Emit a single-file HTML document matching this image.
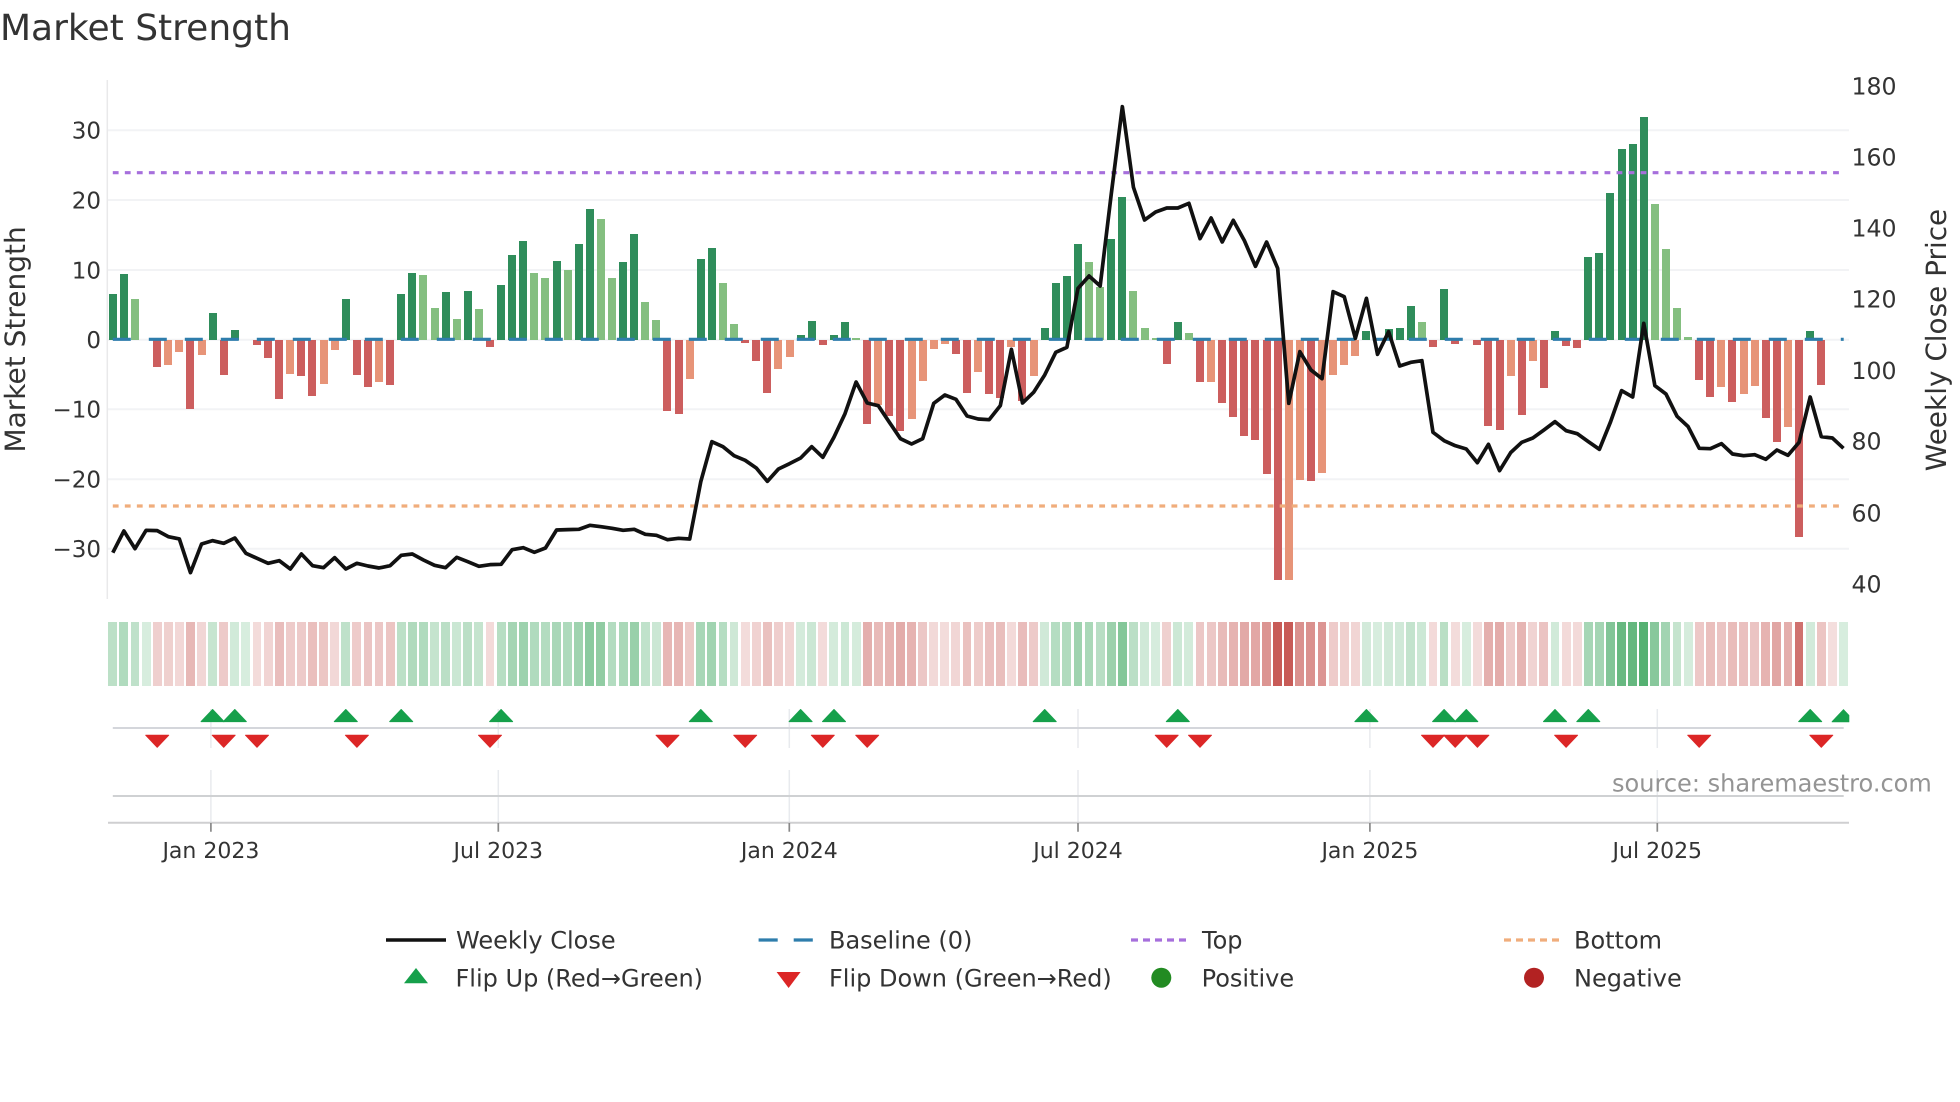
<!DOCTYPE html>
<html lang="en">
<head>
<meta charset="utf-8">
<title>Market Strength</title>
<style>
html,body{margin:0;padding:0;background:#fff;width:1960px;height:1102px;overflow:hidden}
svg{position:absolute;left:0;top:0}
text{font-family:"DejaVu Sans",sans-serif;fill:#333;text-rendering:geometricPrecision}
#r{position:absolute;left:107.25px;top:0;width:1741.8px;height:0;display:flex}
#r i{flex:0 0 11.094px;width:11.094px;height:0;position:relative;display:block}
#r i::before{content:"";position:absolute;left:1.55px;width:8px}
#r i::after{content:"";position:absolute;left:1.1px;width:8.9px;top:622px;height:64px}
.g::before,.h::before{top:calc(339.7px - var(--v)*6.975px);height:calc(var(--v)*6.975px)}
.r::before,.s::before{top:339.7px;height:calc(var(--v)*6.975px)}
.g::before{background:#2f8d5b}
.h::before{background:#84bf80}
.r::before{background:#cc5e5e}
.s::before{background:#e79478}
.g::after,.h::after{background:rgba(42,157,78,calc(.19 + var(--v)*.019))}
.r::after,.s::after{background:rgba(190,60,55,calc(.17 + var(--v)*.0195))}
</style>
</head>
<body>
<svg width="1960" height="1102" viewBox="0 0 1960 1102">
<g stroke="#f2f3f5" stroke-width="2" fill="none">
<path d="M108 130.3H1849M108 200H1849M108 270H1849M108 339.7H1849M108 409.3H1849M108 479.3H1849M108 548.7H1849"/>
</g>
<path d="M107.3 80V599" stroke="#e9e9ea" stroke-width="1.5" fill="none"/>
<g stroke="#e8eaee" stroke-width="1.5" fill="none">
<path d="M210.9 709V748M498.3 709V748M789.3 709V748M1078 709V748M1369.9 709V748M1657.3 709V748"/>
<path d="M210.9 770V823M498.3 770V823M789.3 770V823M1078 770V823M1369.9 770V823M1657.3 770V823"/>
</g>
<path d="M112.8 728H1843.7" stroke="#d4d6db" stroke-width="2" fill="none"/>
<path d="M112.8 796H1843.7" stroke="#cfd1d3" stroke-width="2" fill="none"/>
<path d="M108 822.7H1849" stroke="#cfcfd1" stroke-width="2" fill="none"/>
<path d="M210.9 823V831.7M498.3 823V831.7M789.3 823V831.7M1078 823V831.7M1369.9 823V831.7M1657.3 823V831.7" stroke="#888" stroke-width="1.7" fill="none"/>
</svg>

<div id="r">
<i class="g" style="--v:6.55"></i><i class="g" style="--v:9.4"></i><i class="h" style="--v:5.9"></i><i class="g" style="--v:0"></i><i class="r" style="--v:3.9"></i><i class="s" style="--v:3.7"></i><i class="s" style="--v:1.7"></i><i class="r" style="--v:9.9"></i><i class="s" style="--v:2.15"></i><i class="g" style="--v:3.8"></i>
<i class="r" style="--v:5.1"></i><i class="g" style="--v:1.4"></i><i class="g" style="--v:0"></i><i class="r" style="--v:.75"></i><i class="r" style="--v:2.6"></i><i class="r" style="--v:8.55"></i><i class="s" style="--v:4.9"></i><i class="r" style="--v:5.2"></i><i class="r" style="--v:8.1"></i><i class="s" style="--v:6.35"></i>
<i class="s" style="--v:1.5"></i><i class="g" style="--v:5.8"></i><i class="r" style="--v:5"></i><i class="r" style="--v:6.8"></i><i class="s" style="--v:6"></i><i class="r" style="--v:6.5"></i><i class="g" style="--v:6.55"></i><i class="g" style="--v:9.55"></i><i class="h" style="--v:9.3"></i><i class="h" style="--v:4.5"></i>
<i class="g" style="--v:6.85"></i><i class="h" style="--v:3"></i><i class="g" style="--v:6.95"></i><i class="h" style="--v:4.4"></i><i class="r" style="--v:1.1"></i><i class="g" style="--v:7.8"></i><i class="g" style="--v:12.2"></i><i class="g" style="--v:14.15"></i><i class="h" style="--v:9.5"></i><i class="h" style="--v:8.85"></i>
<i class="g" style="--v:11.3"></i><i class="h" style="--v:9.95"></i><i class="g" style="--v:13.7"></i><i class="g" style="--v:18.7"></i><i class="h" style="--v:17.25"></i><i class="h" style="--v:8.85"></i><i class="g" style="--v:11.1"></i><i class="g" style="--v:15.1"></i><i class="h" style="--v:5.4"></i><i class="h" style="--v:2.8"></i>
<i class="r" style="--v:10.2"></i><i class="r" style="--v:10.65"></i><i class="s" style="--v:5.65"></i><i class="g" style="--v:11.5"></i><i class="g" style="--v:13.1"></i><i class="h" style="--v:8.1"></i><i class="h" style="--v:2.25"></i><i class="r" style="--v:.45"></i><i class="r" style="--v:3.1"></i><i class="r" style="--v:7.6"></i>
<i class="s" style="--v:4.15"></i><i class="s" style="--v:2.5"></i><i class="g" style="--v:.65"></i><i class="g" style="--v:2.7"></i><i class="r" style="--v:.75"></i><i class="g" style="--v:.65"></i><i class="g" style="--v:2.6"></i><i class="h" style="--v:.3"></i><i class="r" style="--v:12.1"></i><i class="s" style="--v:9.4"></i>
<i class="r" style="--v:11"></i><i class="r" style="--v:13.15"></i><i class="s" style="--v:11.4"></i><i class="s" style="--v:5.9"></i><i class="s" style="--v:1.4"></i><i class="s" style="--v:.6"></i><i class="r" style="--v:2.1"></i><i class="r" style="--v:7.65"></i><i class="s" style="--v:4.7"></i><i class="r" style="--v:7.8"></i>
<i class="r" style="--v:8.4"></i><i class="s" style="--v:1.1"></i><i class="r" style="--v:8.85"></i><i class="s" style="--v:5.2"></i><i class="g" style="--v:1.65"></i><i class="g" style="--v:8.2"></i><i class="g" style="--v:9.2"></i><i class="g" style="--v:13.65"></i><i class="h" style="--v:11.1"></i><i class="h" style="--v:7.6"></i>
<i class="g" style="--v:14.5"></i><i class="g" style="--v:20.4"></i><i class="h" style="--v:6.95"></i><i class="h" style="--v:1.65"></i><i class="h" style="--v:.2"></i><i class="r" style="--v:3.5"></i><i class="g" style="--v:2.6"></i><i class="h" style="--v:.9"></i><i class="r" style="--v:6"></i><i class="s" style="--v:6"></i>
<i class="r" style="--v:9.1"></i><i class="r" style="--v:11.1"></i><i class="r" style="--v:13.75"></i><i class="r" style="--v:14.35"></i><i class="r" style="--v:19.25"></i><i class="r" style="--v:34.4"></i><i class="s" style="--v:34.4"></i><i class="s" style="--v:20.15"></i><i class="r" style="--v:20.3"></i><i class="s" style="--v:19.1"></i>
<i class="s" style="--v:5.05"></i><i class="s" style="--v:3.7"></i><i class="s" style="--v:2.4"></i><i class="g" style="--v:1.2"></i><i class="g" style="--v:0"></i><i class="g" style="--v:1.6"></i><i class="g" style="--v:1.65"></i><i class="g" style="--v:4.8"></i><i class="h" style="--v:2.6"></i><i class="r" style="--v:1"></i>
<i class="g" style="--v:7.2"></i><i class="r" style="--v:.6"></i><i class="g" style="--v:0"></i><i class="r" style="--v:.8"></i><i class="r" style="--v:12.4"></i><i class="r" style="--v:12.95"></i><i class="s" style="--v:5.15"></i><i class="r" style="--v:10.85"></i><i class="s" style="--v:3"></i><i class="r" style="--v:6.9"></i>
<i class="g" style="--v:1.25"></i><i class="r" style="--v:.95"></i><i class="r" style="--v:1.2"></i><i class="g" style="--v:11.85"></i><i class="g" style="--v:12.4"></i><i class="g" style="--v:21"></i><i class="g" style="--v:27.35"></i><i class="g" style="--v:28.05"></i><i class="g" style="--v:32"></i><i class="h" style="--v:19.45"></i>
<i class="h" style="--v:13"></i><i class="h" style="--v:4.55"></i><i class="h" style="--v:.4"></i><i class="r" style="--v:5.85"></i><i class="r" style="--v:8.2"></i><i class="s" style="--v:6.85"></i><i class="r" style="--v:8.95"></i><i class="s" style="--v:7.85"></i><i class="s" style="--v:6.7"></i><i class="r" style="--v:11.25"></i>
<i class="r" style="--v:14.65"></i><i class="s" style="--v:12.5"></i><i class="r" style="--v:28.3"></i><i class="g" style="--v:1.2"></i><i class="r" style="--v:6.55"></i><i class="r" style="--v:0"></i><i class="g" style="--v:0"></i>
</div>

<svg width="1960" height="1102" viewBox="0 0 1960 1102">
<defs>
<polygon id="u" points="0,709.5 11.5,721.6 -11.5,721.6" fill="#16a04b" stroke="#16a04b" stroke-width="1" stroke-linejoin="round"/>
<polygon id="d" points="-11.5,735.2 11.5,735.2 0,747.3" fill="#dc2626" stroke="#dc2626" stroke-width="1" stroke-linejoin="round"/>
</defs>
<path d="M112.8 339.3H1843.7" stroke="#2e7dac" stroke-width="3.2" stroke-dasharray="18 18" fill="none"/>
<path d="M112.8 172.7H1843.7" stroke="#a66fdc" stroke-width="3.2" stroke-dasharray="5.8 6.23" fill="none"/>
<path d="M112.8 506H1843.7" stroke="#f0ad7c" stroke-width="3.2" stroke-dasharray="5.8 6.23" fill="none"/>
<polyline transform="translate(112.8 0) scale(11.094 .33333)" vector-effect="non-scaling-stroke" fill="none" stroke="#111" stroke-width="3.7" stroke-linejoin="round" points="0,1658 1,1593 2,1646 3,1591 4,1592 5,1610 6,1617 7,1718 8,1632 9,1622 10,1630 11,1614 12,1660 13,1675 14,1690 15,1682 16,1707 17,1662 18,1697 19,1703 20,1673 21,1707 22,1690 23,1698 24,1704 25,1697 26,1666 27,1662 28,1680 29,1696 30,1703 31,1672 32,1685 33,1699 34,1694 35,1693 36,1649 37,1643 38,1657 39,1644 40,1590 41,1589 42,1588 43,1576 44,1580 45,1585 46,1591 47,1588 48,1603 49,1606 50,1619 51,1615 52,1617 53,1445 54,1325 55,1340 56,1367 57,1381 58,1404 59,1444 60,1407 61,1391 62,1374 63,1340 64,1372 65,1312 66,1241 67,1146 68,1209 69,1217 70,1267 71,1316 72,1332 73,1316 74,1210 75,1185 76,1198 77,1248 78,1257 79,1259 80,1217 81,1048 82,1209 83,1177 84,1125 85,1057 86,1042 87,865 88,828 89,858 90,582 91,320 92,562 93,660 94,636 95,624 96,624 97,610 98,716 99,654 100,726 101,661 102,722 103,799 104,726 105,805 106,1210 107,1055 108,1110 109,1136 110,875 111,890 112,1015 113,895 114,1063 115,995 116,1098 117,1087 118,1082 119,1297 120,1322 121,1337 122,1347 123,1388 124,1333 125,1412 126,1358 127,1327 128,1314 129,1290 130,1265 131,1292 132,1301 133,1325 134,1348 135,1266 136,1172 137,1191 138,970 139,1157 140,1182 141,1249 142,1280 143,1345 144,1346 145,1331 146,1362 147,1367 148,1364 149,1378 150,1350 151,1366 152,1327 153,1191 154,1310 155,1314 156,1345"/>

<use href="#u" x="212.6"/><use href="#u" x="234.8"/><use href="#u" x="345.8"/><use href="#u" x="401.2"/><use href="#u" x="501.1"/><use href="#u" x="700.8"/><use href="#u" x="800.6"/><use href="#u" x="834"/><use href="#u" x="1044.7"/><use href="#u" x="1177.8"/><use href="#u" x="1366.4"/><use href="#u" x="1444.1"/><use href="#u" x="1466.3"/><use href="#u" x="1555"/><use href="#u" x="1588.3"/><use href="#u" x="1810.2"/>
<polygon points="1832,721.6 1843.5,709.5 1849,715.3 1849,722 1832,722" fill="#16a04b" stroke="#16a04b" stroke-width=".6" stroke-linejoin="round"/>
<use href="#d" x="157.2"/><use href="#d" x="223.7"/><use href="#d" x="257"/><use href="#d" x="356.9"/><use href="#d" x="490"/><use href="#d" x="667.5"/><use href="#d" x="745.2"/><use href="#d" x="822.8"/><use href="#d" x="867.2"/><use href="#d" x="1166.7"/><use href="#d" x="1200"/><use href="#d" x="1433"/><use href="#d" x="1455.2"/><use href="#d" x="1477.4"/><use href="#d" x="1566.1"/><use href="#d" x="1699.2"/><use href="#d" x="1821.3"/>

<text x="0" y="40" font-size="36">Market Strength</text>
<text transform="translate(25.2 339.4) rotate(-90)" text-anchor="middle" font-size="28">Market Strength</text>
<text transform="translate(1946 340) rotate(-90)" text-anchor="middle" font-size="27.9">Weekly Close Price</text>

<g font-size="23" text-anchor="end">
<text x="101" y="138.5">30</text>
<text x="101" y="208.4">20</text>
<text x="101" y="278.4">10</text>
<text x="101" y="348">0</text>
<text x="101" y="417.7">−10</text>
<text x="101" y="487.7">−20</text>
<text x="101" y="557">−30</text>
</g>
<g font-size="23.6">
<text x="1851.5" y="94.4">180</text>
<text x="1851.5" y="165.4">160</text>
<text x="1851.5" y="236.7">140</text>
<text x="1851.5" y="307.7">120</text>
<text x="1851.5" y="379">100</text>
<text x="1851.5" y="449.4">80</text>
<text x="1851.5" y="521.4">60</text>
<text x="1851.5" y="592.7">40</text>
</g>
<g font-size="22" text-anchor="middle">
<text x="210.9" y="858">Jan 2023</text>
<text x="498.3" y="858">Jul 2023</text>
<text x="789.3" y="858">Jan 2024</text>
<text x="1078" y="858">Jul 2024</text>
<text x="1369.9" y="858">Jan 2025</text>
<text x="1657.3" y="858">Jul 2025</text>
</g>
<text x="1612" y="791.7" font-size="24.05" style="fill:#949494">source: sharemaestro.com</text>

<path d="M386 940H446" stroke="#111" stroke-width="3.6" fill="none"/>
<path d="M758.6 940H777.7M793.7 940H812.8" stroke="#2e7dac" stroke-width="3.2" fill="none"/>
<path d="M1131 940H1186" stroke="#a66fdc" stroke-width="3.2" stroke-dasharray="7 5" fill="none"/>
<path d="M1504 940H1559" stroke="#f0ad7c" stroke-width="3.2" stroke-dasharray="7 5" fill="none"/>
<polygon points="416,968 428,983.3 404,983.3" fill="#16a04b"/>
<polygon points="776.6,972 800.6,972 788.6,988" fill="#dc2626"/>
<circle cx="1161.3" cy="977.7" r="10" fill="#228b22"/>
<circle cx="1534" cy="977.7" r="10" fill="#b22222"/>
<g font-size="24">
<text x="456" y="948.3">Weekly Close</text>
<text x="829" y="948.3">Baseline (0)</text>
<text x="1202" y="948.3">Top</text>
<text x="1574" y="948.3">Bottom</text>
<text x="455.5" y="986.7">Flip Up (Red→Green)</text>
<text x="829" y="986.7">Flip Down (Green→Red)</text>
<text x="1201.6" y="986.7">Positive</text>
<text x="1574" y="986.7">Negative</text>
</g>
</svg>
</body>
</html>
